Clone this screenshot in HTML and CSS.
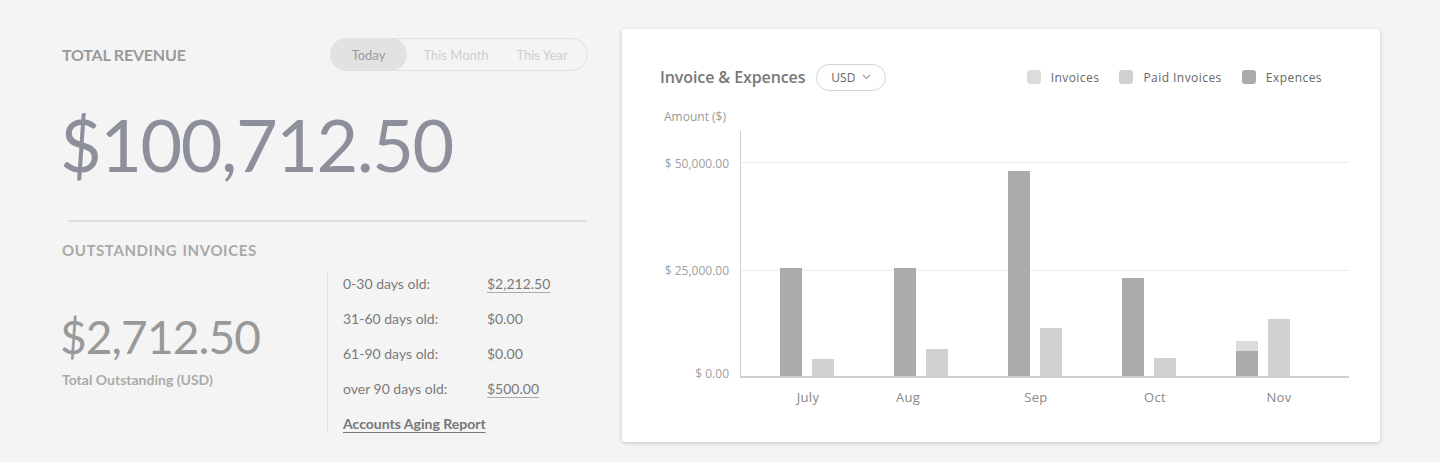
FILE: index.html
```html
<!DOCTYPE html>
<html>
<head>
<meta charset="utf-8">
<link rel="stylesheet" href="styles.css">
</head>
<body>
<div class="page">
  <section class="summary">
    <div class="rev-head">
      <h2 class="label">TOTAL REVENUE</h2>
      <div class="toggle">
        <span class="opt active">Today</span>
        <span class="opt">This Month</span>
        <span class="opt">This Year</span>
      </div>
    </div>
    <div class="big">$100,712.50</div>
    <hr class="rule">
    <h2 class="label out-label">OUTSTANDING INVOICES</h2>
    <div class="out">
      <div class="out-total">
        <div class="mid">$2,712.50</div>
        <div class="sub">Total Outstanding (USD)</div>
      </div>
      <div class="aging">
        <div class="row"><span class="k">0-30 days old:</span><a class="v link">$2,212.50</a></div>
        <div class="row"><span class="k">31-60 days old:</span><span class="v">$0.00</span></div>
        <div class="row"><span class="k">61-90 days old:</span><span class="v">$0.00</span></div>
        <div class="row"><span class="k">over 90 days old:</span><a class="v link">$500.00</a></div>
        <div class="row"><a class="report">Accounts Aging Report</a></div>
      </div>
    </div>
  </section>

  <section class="card">
    <div class="card-head">
      <h3 class="title">Invoice &amp; Expences</h3>
      <div class="cur">USD <svg width="9" height="6" viewBox="0 0 9 6"><polyline points="1,1 4.5,4.5 8,1" fill="none" stroke="#999" stroke-width="1.1"/></svg></div>
      <div class="legend">
        <span class="lg"><i class="sw sw-inv"></i>Invoices</span>
        <span class="lg"><i class="sw sw-paid"></i>Paid Invoices</span>
        <span class="lg"><i class="sw sw-exp"></i>Expences</span>
      </div>
    </div>
    <div class="axis-title">Amount ($)</div>
    <div class="chart">
      <div class="yaxis">
        <span class="tick t50">$ 50,000.00</span>
        <span class="tick t25">$ 25,000.00</span>
        <span class="tick t0">$ 0.00</span>
      </div>
      <div class="plot">
        <div class="grid g50"></div>
        <div class="grid g25"></div>
        <div class="groups">
          <div class="group">
            <div class="bars">
              <div class="stack"><div class="bar exp" style="height:108px"></div></div>
              <div class="stack"><div class="bar paid" style="height:17px"></div></div>
            </div>
            <div class="month">July</div>
          </div>
          <div class="group">
            <div class="bars">
              <div class="stack"><div class="bar exp" style="height:108px"></div></div>
              <div class="stack"><div class="bar paid" style="height:27px"></div></div>
            </div>
            <div class="month">Aug</div>
          </div>
          <div class="group">
            <div class="bars">
              <div class="stack"><div class="bar exp" style="height:205px"></div></div>
              <div class="stack"><div class="bar paid" style="height:48px"></div></div>
            </div>
            <div class="month">Sep</div>
          </div>
          <div class="group">
            <div class="bars">
              <div class="stack"><div class="bar exp" style="height:98px"></div></div>
              <div class="stack"><div class="bar paid" style="height:18px"></div></div>
            </div>
            <div class="month">Oct</div>
          </div>
          <div class="group">
            <div class="bars">
              <div class="stack"><div class="bar inv" style="height:10px"></div><div class="bar exp" style="height:25px"></div></div>
              <div class="stack"><div class="bar paid" style="height:57px"></div></div>
            </div>
            <div class="month">Nov</div>
          </div>
        </div>
      </div>
    </div>
  </section>
</div>
</body>
</html>
```

FILE: styles.css
```css
* { box-sizing: border-box; }
html, body { margin: 0; padding: 0; }
body {
  background: #f4f4f4;
  width: 1440px;
  height: 462px;
  overflow: hidden;
  font-family: Lato, "Liberation Sans", sans-serif;
}
.page {
  display: flex;
  padding: 29px 0 0 62px;
  gap: 34px;
}
.summary {
  width: 526px;
  padding-top: 9px;
}
.rev-head {
  display: flex;
  justify-content: space-between;
  align-items: center;
}
.label {
  margin: 0;
  font-size: 16px;
  font-weight: 700;
  color: #9a9a9a;
  letter-spacing: -0.2px;
}
.toggle {
  display: flex;
  height: 33px;
  border: 1px solid #e0e0e0;
  border-radius: 17px;
  font-size: 13px;
  color: #cfcfcf;
}
.opt {
  display: flex;
  align-items: center;
  justify-content: center;
  padding: 0;
}
.opt.active {
  background: #e2e2e2;
  color: #9b9ba3;
  border-radius: 17px;
  width: 77px;
  margin: -1px 0 -1px -1px;
}
.opt:nth-child(2) { width: 98px; }
.opt:nth-child(3) { width: 82px; padding-right: 8px; }
.big {
  font-size: 72px;
  font-weight: 400;
  color: #8d909b;
  line-height: 1;
  margin: 37px 0 0 -2px;
  letter-spacing: -1.5px;
}
.rule {
  margin: 40px 1px 0 6px;
  border: 0;
  border-top: 2px solid #dedede;
}
.out-label {
  margin-top: 19px;
  font-size: 15px;
  color: #a9a9a9;
  letter-spacing: 0.6px;
  word-spacing: 1px;
}
.out {
  display: flex;
  margin-top: 12px;
}
.out-total {
  width: 265px;
  padding-top: 43px;
  color: #999;
}
.mid {
  font-size: 46px;
  line-height: 1;
  margin-left: -2px;
  letter-spacing: -0.9px;
}
.sub {
  font-size: 14px;
  font-weight: 700;
  color: #ababab;
  margin-top: 11px;
}
.aging {
  border-left: 1px solid #e3e3e3;
  padding: 3px 0 0 15px;
  height: 161px;
  display: flex;
  flex-direction: column;
  gap: 15px;
}
.row {
  display: flex;
  flex-shrink: 0;
  height: 20px;
  align-items: center;
  font-size: 14px;
  color: #7a7a7a;
  line-height: 1;
}
.k { width: 144px; }
.link { text-decoration: underline; text-decoration-color: #aaa; text-underline-offset: 3px; }
.report {
  font-weight: 700;
  color: #777;
  text-decoration: underline;
  text-underline-offset: 3px;
}

.card {
  width: 758px;
  height: 413px;
  background: #fff;
  border-radius: 3px;
  box-shadow: 0 1px 4px rgba(0,0,0,0.2);
  padding: 35px 0 0 38px;
  font-family: "Open Sans", "Liberation Sans", sans-serif;
}
.card-head {
  display: flex;
  align-items: center;
  height: 26px;
}
.title {
  margin: 0;
  font-size: 16px;
  font-weight: 600;
  color: #777;
  letter-spacing: -0.1px;
}
.cur {
  margin-left: 11px;
  height: 27px;
  width: 70px;
  border: 1px solid #d4d4d4;
  border-radius: 14px;
  display: flex;
  align-items: center;
  justify-content: center;
  gap: 7px;
  font-size: 12px;
  color: #666;
}
.legend {
  margin-left: auto;
  margin-right: 58px;
  display: flex;
  gap: 20px;
  font-size: 12px;
  letter-spacing: 0.45px;
  color: #666;
}
.lg { display: flex; align-items: center; }
.sw {
  display: inline-block;
  width: 14px;
  height: 14px;
  border-radius: 3px;
  margin-right: 10px;
}
.sw-inv { background: #dcdcdc; }
.sw-paid { background: #d0d0d0; }
.sw-exp { background: #ababab; }
.axis-title {
  margin: 18px 0 0 4px;
  font-size: 12px;
  color: #999;
}
.chart {
  display: flex;
  margin-top: 6px;
}
.yaxis {
  width: 80px;
  position: relative;
  font-size: 12px;
  color: #a0a0a0;
}
.tick {
  position: absolute;
  right: 11px;
  line-height: 1;
  white-space: nowrap;
}
.t50 { top: 27px; }
.t25 { top: 134px; }
.t0 { top: 237px; }
.plot {
  position: relative;
  width: 609px;
  height: 247px;
  border-left: 1px solid #ccc;
}
.grid {
  position: absolute;
  left: 0;
  right: 0;
  border-top: 1px solid #ececec;
}
.g50 { top: 31px; }
.g25 { top: 139px; }
.groups {
  position: absolute;
  left: 0;
  right: 0;
  top: 0;
  height: 247px;
  border-bottom: 2px solid #cfcfcf;
  display: flex;
  align-items: flex-end;
  padding-left: 39px;
  gap: 60px;
}
.group {
  position: relative;
  width: 54px;
}
.bars {
  display: flex;
  gap: 10px;
  align-items: flex-end;
}
.stack {
  width: 22px;
  display: flex;
  flex-direction: column;
}
.bar.exp { background: #ababab; }
.bar.paid { background: #d0d0d0; }
.bar.inv { background: #dcdcdc; }
.month {
  position: absolute;
  top: 100%;
  left: -20px;
  right: -20px;
  margin-top: 12px;
  text-align: center;
  font-size: 13px;
  letter-spacing: 0.3px;
  color: #888;
}
.group:nth-child(1) .month { transform: translateX(1px); }
.group:nth-child(2) .month { transform: translateX(-13px); }
.group:nth-child(3) .month { transform: translateX(1px); }
.group:nth-child(4) .month { transform: translateX(6px); }
.group:nth-child(5) .month { transform: translateX(16px); }
```
